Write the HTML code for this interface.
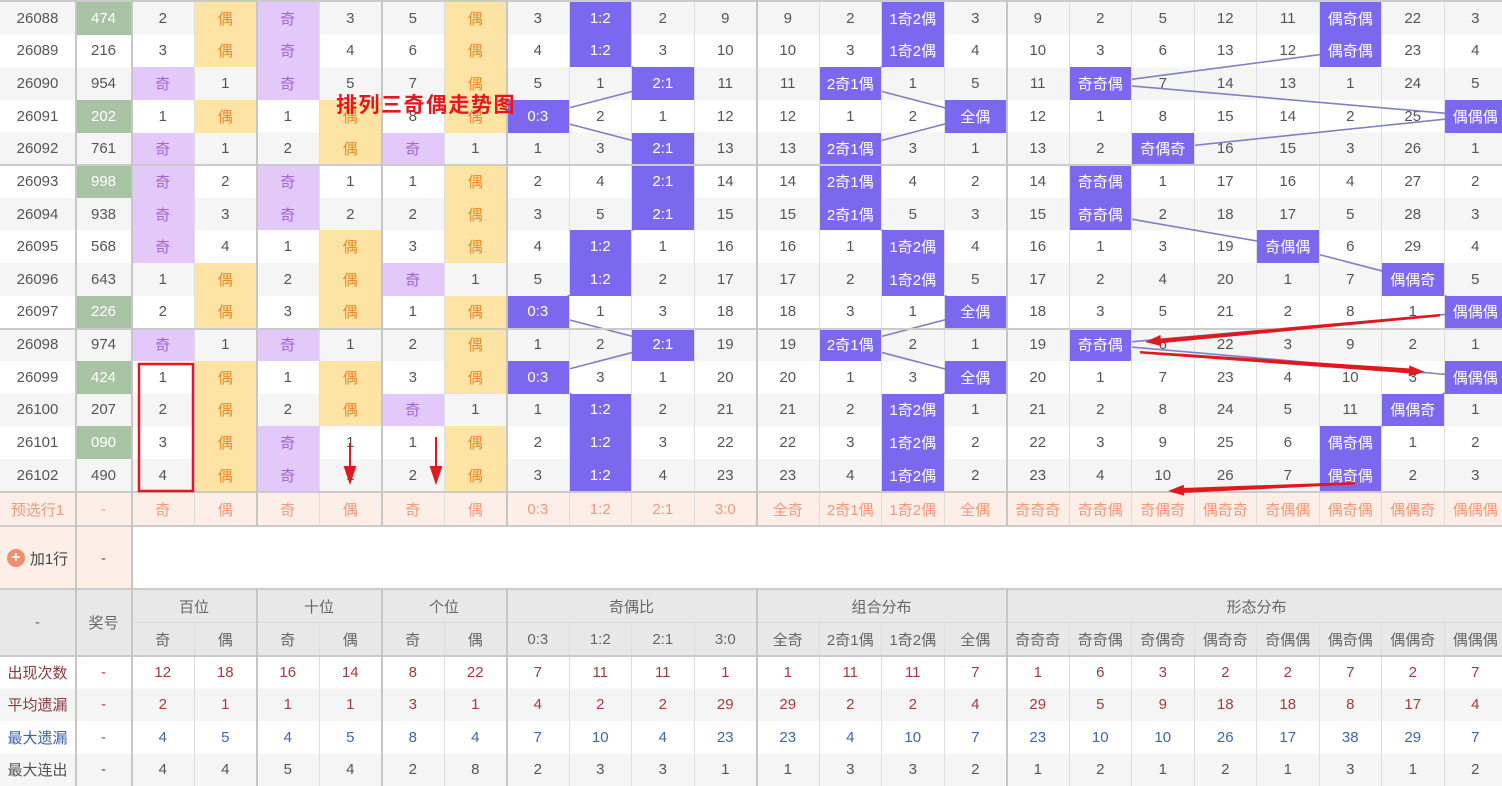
<!DOCTYPE html>
<html><head><meta charset="utf-8">
<style>
*{margin:0;padding:0;box-sizing:border-box}
body{width:1502px;height:786px;overflow:hidden;background:#fff;position:relative;font-family:"Liberation Sans","Noto Sans CJK SC",sans-serif;font-size:15px;color:#555}
.grid{position:absolute;left:0;width:1507px;display:grid;grid-template-columns:76px 56px repeat(22,62.5px)}
.grid i{font-style:normal;display:flex;align-items:center;justify-content:center;border-right:1px solid #dedede;white-space:nowrap;overflow:hidden}
#body{top:2px;grid-auto-rows:32.64px;background:repeating-linear-gradient(#f5f5f5 0 32.64px,#fff 32.64px 65.28px)}
.y{background:#fde3a4;color:#ea8a2c}
.p{background:#e2c9f9;color:#a262d2}
.b{background:#7b68ee;color:#fff;position:relative;z-index:2}
.g{background:#a8c3a3;color:#fff}
#pre{top:493px;grid-auto-rows:33px;background:#fdeee7;color:#ef9a7a}
#add{top:527px;grid-auto-rows:62px}
#hdr{top:590px;grid-template-rows:33px 33px;background:#e8e8e8;color:#666}
#hdr i{border-bottom:1px solid #dcdcdc}
#st{top:656px;grid-auto-rows:32.5px;background:repeating-linear-gradient(#fff 0 32.5px,#f5f5f5 32.5px 65px)}
.r{color:#a33d3d}.bl{color:#3e65b2}
.lab1{color:#8b3a3a}.lab3{color:#3a62b0}
.vl{position:absolute;top:0;width:2px;background:#c6c6c6;z-index:3}
.hl{position:absolute;left:0;width:1502px;height:2px;background:#cbcbcb;z-index:3}
</style></head><body>
<div class="hl" style="top:0"></div>

<div class="grid" id="body">
<svg style="position:absolute;left:0;top:-2px;z-index:1" width="1507" height="495">
<g fill="none" stroke="#8080c4" stroke-width="1.6">
<polyline points="600.75,18 600.75,50.6 663.25,83.3 538.25,115.9 663.25,148.6 663.25,181.2 663.25,213.8 600.75,246.5 600.75,279.1 538.25,311.8 663.25,344.4 538.25,377 600.75,409.7 600.75,442.3 600.75,474.9"/>
<polyline points="913.25,18 913.25,50.6 850.75,83.3 975.75,115.9 850.75,148.6 850.75,181.2 850.75,213.8 913.25,246.5 913.25,279.1 975.75,311.8 850.75,344.4 975.75,377 913.25,409.7 913.25,442.3 913.25,474.9"/>
<polyline points="1350.75,18 1350.75,50.6 1100.75,83.3 1475.75,115.9 1163.25,148.6 1100.75,181.2 1100.75,213.8 1288.25,246.5 1413.25,279.1 1475.75,311.8 1100.75,344.4 1475.75,377 1413.25,409.7 1350.75,442.3 1350.75,474.9"/>
</g></svg>
<i>26088</i><i class="g">474</i><i>2</i><i class="y">偶</i><i class="p">奇</i><i>3</i><i>5</i><i class="y">偶</i><i>3</i><i class="b">1:2</i><i>2</i><i>9</i><i>9</i><i>2</i><i class="b">1奇2偶</i><i>3</i><i>9</i><i>2</i><i>5</i><i>12</i><i>11</i><i class="b">偶奇偶</i><i>22</i><i>3</i>
<i>26089</i><i>216</i><i>3</i><i class="y">偶</i><i class="p">奇</i><i>4</i><i>6</i><i class="y">偶</i><i>4</i><i class="b">1:2</i><i>3</i><i>10</i><i>10</i><i>3</i><i class="b">1奇2偶</i><i>4</i><i>10</i><i>3</i><i>6</i><i>13</i><i>12</i><i class="b">偶奇偶</i><i>23</i><i>4</i>
<i>26090</i><i>954</i><i class="p">奇</i><i>1</i><i class="p">奇</i><i>5</i><i>7</i><i class="y">偶</i><i>5</i><i>1</i><i class="b">2:1</i><i>11</i><i>11</i><i class="b">2奇1偶</i><i>1</i><i>5</i><i>11</i><i class="b">奇奇偶</i><i>7</i><i>14</i><i>13</i><i>1</i><i>24</i><i>5</i>
<i>26091</i><i class="g">202</i><i>1</i><i class="y">偶</i><i>1</i><i class="y">偶</i><i>8</i><i class="y">偶</i><i class="b">0:3</i><i>2</i><i>1</i><i>12</i><i>12</i><i>1</i><i>2</i><i class="b">全偶</i><i>12</i><i>1</i><i>8</i><i>15</i><i>14</i><i>2</i><i>25</i><i class="b">偶偶偶</i>
<i>26092</i><i>761</i><i class="p">奇</i><i>1</i><i>2</i><i class="y">偶</i><i class="p">奇</i><i>1</i><i>1</i><i>3</i><i class="b">2:1</i><i>13</i><i>13</i><i class="b">2奇1偶</i><i>3</i><i>1</i><i>13</i><i>2</i><i class="b">奇偶奇</i><i>16</i><i>15</i><i>3</i><i>26</i><i>1</i>
<i>26093</i><i class="g">998</i><i class="p">奇</i><i>2</i><i class="p">奇</i><i>1</i><i>1</i><i class="y">偶</i><i>2</i><i>4</i><i class="b">2:1</i><i>14</i><i>14</i><i class="b">2奇1偶</i><i>4</i><i>2</i><i>14</i><i class="b">奇奇偶</i><i>1</i><i>17</i><i>16</i><i>4</i><i>27</i><i>2</i>
<i>26094</i><i>938</i><i class="p">奇</i><i>3</i><i class="p">奇</i><i>2</i><i>2</i><i class="y">偶</i><i>3</i><i>5</i><i class="b">2:1</i><i>15</i><i>15</i><i class="b">2奇1偶</i><i>5</i><i>3</i><i>15</i><i class="b">奇奇偶</i><i>2</i><i>18</i><i>17</i><i>5</i><i>28</i><i>3</i>
<i>26095</i><i>568</i><i class="p">奇</i><i>4</i><i>1</i><i class="y">偶</i><i>3</i><i class="y">偶</i><i>4</i><i class="b">1:2</i><i>1</i><i>16</i><i>16</i><i>1</i><i class="b">1奇2偶</i><i>4</i><i>16</i><i>1</i><i>3</i><i>19</i><i class="b">奇偶偶</i><i>6</i><i>29</i><i>4</i>
<i>26096</i><i>643</i><i>1</i><i class="y">偶</i><i>2</i><i class="y">偶</i><i class="p">奇</i><i>1</i><i>5</i><i class="b">1:2</i><i>2</i><i>17</i><i>17</i><i>2</i><i class="b">1奇2偶</i><i>5</i><i>17</i><i>2</i><i>4</i><i>20</i><i>1</i><i>7</i><i class="b">偶偶奇</i><i>5</i>
<i>26097</i><i class="g">226</i><i>2</i><i class="y">偶</i><i>3</i><i class="y">偶</i><i>1</i><i class="y">偶</i><i class="b">0:3</i><i>1</i><i>3</i><i>18</i><i>18</i><i>3</i><i>1</i><i class="b">全偶</i><i>18</i><i>3</i><i>5</i><i>21</i><i>2</i><i>8</i><i>1</i><i class="b">偶偶偶</i>
<i>26098</i><i>974</i><i class="p">奇</i><i>1</i><i class="p">奇</i><i>1</i><i>2</i><i class="y">偶</i><i>1</i><i>2</i><i class="b">2:1</i><i>19</i><i>19</i><i class="b">2奇1偶</i><i>2</i><i>1</i><i>19</i><i class="b">奇奇偶</i><i>6</i><i>22</i><i>3</i><i>9</i><i>2</i><i>1</i>
<i>26099</i><i class="g">424</i><i>1</i><i class="y">偶</i><i>1</i><i class="y">偶</i><i>3</i><i class="y">偶</i><i class="b">0:3</i><i>3</i><i>1</i><i>20</i><i>20</i><i>1</i><i>3</i><i class="b">全偶</i><i>20</i><i>1</i><i>7</i><i>23</i><i>4</i><i>10</i><i>3</i><i class="b">偶偶偶</i>
<i>26100</i><i>207</i><i>2</i><i class="y">偶</i><i>2</i><i class="y">偶</i><i class="p">奇</i><i>1</i><i>1</i><i class="b">1:2</i><i>2</i><i>21</i><i>21</i><i>2</i><i class="b">1奇2偶</i><i>1</i><i>21</i><i>2</i><i>8</i><i>24</i><i>5</i><i>11</i><i class="b">偶偶奇</i><i>1</i>
<i>26101</i><i class="g">090</i><i>3</i><i class="y">偶</i><i class="p">奇</i><i>1</i><i>1</i><i class="y">偶</i><i>2</i><i class="b">1:2</i><i>3</i><i>22</i><i>22</i><i>3</i><i class="b">1奇2偶</i><i>2</i><i>22</i><i>3</i><i>9</i><i>25</i><i>6</i><i class="b">偶奇偶</i><i>1</i><i>2</i>
<i>26102</i><i>490</i><i>4</i><i class="y">偶</i><i class="p">奇</i><i>1</i><i>2</i><i class="y">偶</i><i>3</i><i class="b">1:2</i><i>4</i><i>23</i><i>23</i><i>4</i><i class="b">1奇2偶</i><i>2</i><i>23</i><i>4</i><i>10</i><i>26</i><i>7</i><i class="b">偶奇偶</i><i>2</i><i>3</i>
</div>

<div class="grid" id="pre">
<i>预选行1</i><i>-</i><i>奇</i><i>偶</i><i>奇</i><i>偶</i><i>奇</i><i>偶</i><i>0:3</i><i>1:2</i><i>2:1</i><i>3:0</i><i>全奇</i><i>2奇1偶</i><i>1奇2偶</i><i>全偶</i><i>奇奇奇</i><i>奇奇偶</i><i>奇偶奇</i><i>偶奇奇</i><i>奇偶偶</i><i>偶奇偶</i><i>偶偶奇</i><i>偶偶偶</i>
</div>

<div class="grid" id="add">
<i style="background:#fdeee7;color:#444;font-size:15px"><span style="display:inline-block;width:18px;height:18px;border-radius:50%;background:#ef8f6e;color:#fff;font-size:16px;line-height:18px;text-align:center;margin-right:5px;font-weight:bold">+</span>加1行</i><i style="background:#fdeee7">-</i><i style="grid-column:3/25;border:none"></i>
</div>

<div class="grid" id="hdr">
<i style="grid-row:1/3">-</i><i style="grid-row:1/3">奖号</i>
<i style="grid-column:3/5">百位</i><i style="grid-column:5/7">十位</i><i style="grid-column:7/9">个位</i><i style="grid-column:9/13">奇偶比</i><i style="grid-column:13/17">组合分布</i><i style="grid-column:17/25">形态分布</i>
<i style="grid-row:2">奇</i><i style="grid-row:2">偶</i><i style="grid-row:2">奇</i><i style="grid-row:2">偶</i><i style="grid-row:2">奇</i><i style="grid-row:2">偶</i><i style="grid-row:2">0:3</i><i style="grid-row:2">1:2</i><i style="grid-row:2">2:1</i><i style="grid-row:2">3:0</i><i style="grid-row:2">全奇</i><i style="grid-row:2">2奇1偶</i><i style="grid-row:2">1奇2偶</i><i style="grid-row:2">全偶</i><i style="grid-row:2">奇奇奇</i><i style="grid-row:2">奇奇偶</i><i style="grid-row:2">奇偶奇</i><i style="grid-row:2">偶奇奇</i><i style="grid-row:2">奇偶偶</i><i style="grid-row:2">偶奇偶</i><i style="grid-row:2">偶偶奇</i><i style="grid-row:2">偶偶偶</i>
</div>

<div class="grid" id="st">
<i class="lab1">出现次数</i><i class="r">-</i><i class="r">12</i><i class="r">18</i><i class="r">16</i><i class="r">14</i><i class="r">8</i><i class="r">22</i><i class="r">7</i><i class="r">11</i><i class="r">11</i><i class="r">1</i><i class="r">1</i><i class="r">11</i><i class="r">11</i><i class="r">7</i><i class="r">1</i><i class="r">6</i><i class="r">3</i><i class="r">2</i><i class="r">2</i><i class="r">7</i><i class="r">2</i><i class="r">7</i>
<i class="lab1">平均遗漏</i><i class="r">-</i><i class="r">2</i><i class="r">1</i><i class="r">1</i><i class="r">1</i><i class="r">3</i><i class="r">1</i><i class="r">4</i><i class="r">2</i><i class="r">2</i><i class="r">29</i><i class="r">29</i><i class="r">2</i><i class="r">2</i><i class="r">4</i><i class="r">29</i><i class="r">5</i><i class="r">9</i><i class="r">18</i><i class="r">18</i><i class="r">8</i><i class="r">17</i><i class="r">4</i>
<i class="lab3">最大遗漏</i><i class="bl">-</i><i class="bl">4</i><i class="bl">5</i><i class="bl">4</i><i class="bl">5</i><i class="bl">8</i><i class="bl">4</i><i class="bl">7</i><i class="bl">10</i><i class="bl">4</i><i class="bl">23</i><i class="bl">23</i><i class="bl">4</i><i class="bl">10</i><i class="bl">7</i><i class="bl">23</i><i class="bl">10</i><i class="bl">10</i><i class="bl">26</i><i class="bl">17</i><i class="bl">38</i><i class="bl">29</i><i class="bl">7</i>
<i>最大连出</i><i>-</i><i>4</i><i>4</i><i>5</i><i>4</i><i>2</i><i>8</i><i>2</i><i>3</i><i>3</i><i>1</i><i>1</i><i>3</i><i>3</i><i>2</i><i>1</i><i>2</i><i>1</i><i>2</i><i>1</i><i>3</i><i>1</i><i>2</i>
</div>

<div class="hl" style="top:164px"></div>
<div class="hl" style="top:328px"></div>
<div class="hl" style="top:491px"></div>
<div class="hl" style="top:525px"></div>
<div class="hl" style="top:588px"></div>
<div class="hl" style="top:655px"></div>
<div class="vl" style="left:75px;height:786px"></div>
<div class="vl" style="left:131px;height:786px"></div>
<div class="vl" style="left:256px;height:527px"></div><div class="vl" style="left:256px;top:589px;height:197px"></div>
<div class="vl" style="left:381px;height:527px"></div><div class="vl" style="left:381px;top:589px;height:197px"></div>
<div class="vl" style="left:506px;height:527px"></div><div class="vl" style="left:506px;top:589px;height:197px"></div>
<div class="vl" style="left:756px;height:527px"></div><div class="vl" style="left:756px;top:589px;height:197px"></div>
<div class="vl" style="left:1006px;height:527px"></div><div class="vl" style="left:1006px;top:589px;height:197px"></div>

<div style="position:absolute;left:336px;top:91px;z-index:6;color:#e8161c;font-weight:bold;font-size:21px;letter-spacing:1.5px;font-family:'Noto Sans CJK SC',sans-serif;line-height:26px">排列三奇偶走势图</div>
<svg style="position:absolute;left:0;top:0;z-index:7" width="1502" height="786">
<rect x="139" y="364" width="54" height="127" fill="none" stroke="#e0191e" stroke-width="2.5"/>
<g stroke="#e0191e" stroke-width="2" fill="#e0191e">
<line x1="350" y1="443" x2="350" y2="470"/><polygon points="345,467 355,467 350,482"/>
<line x1="436" y1="437" x2="436" y2="470"/><polygon points="431,467 441,467 436,482"/>
</g>
<g fill="#e0191e">
<polygon points="1440,314 1440,316.5 1158,343.5 1158,339"/><polygon points="1161.4,346 1160.4,335 1145,342"/>
<polygon points="1140,351 1140,353.5 1411,373.5 1411,368.5"/><polygon points="1408.7,376.4 1409.3,365.4 1425,372"/>
<polygon points="1355,482 1355,484.5 1182,493 1182,488"/><polygon points="1184.2,495.8 1183.8,484.8 1168,491"/>
</g>
</svg>
</body></html>
